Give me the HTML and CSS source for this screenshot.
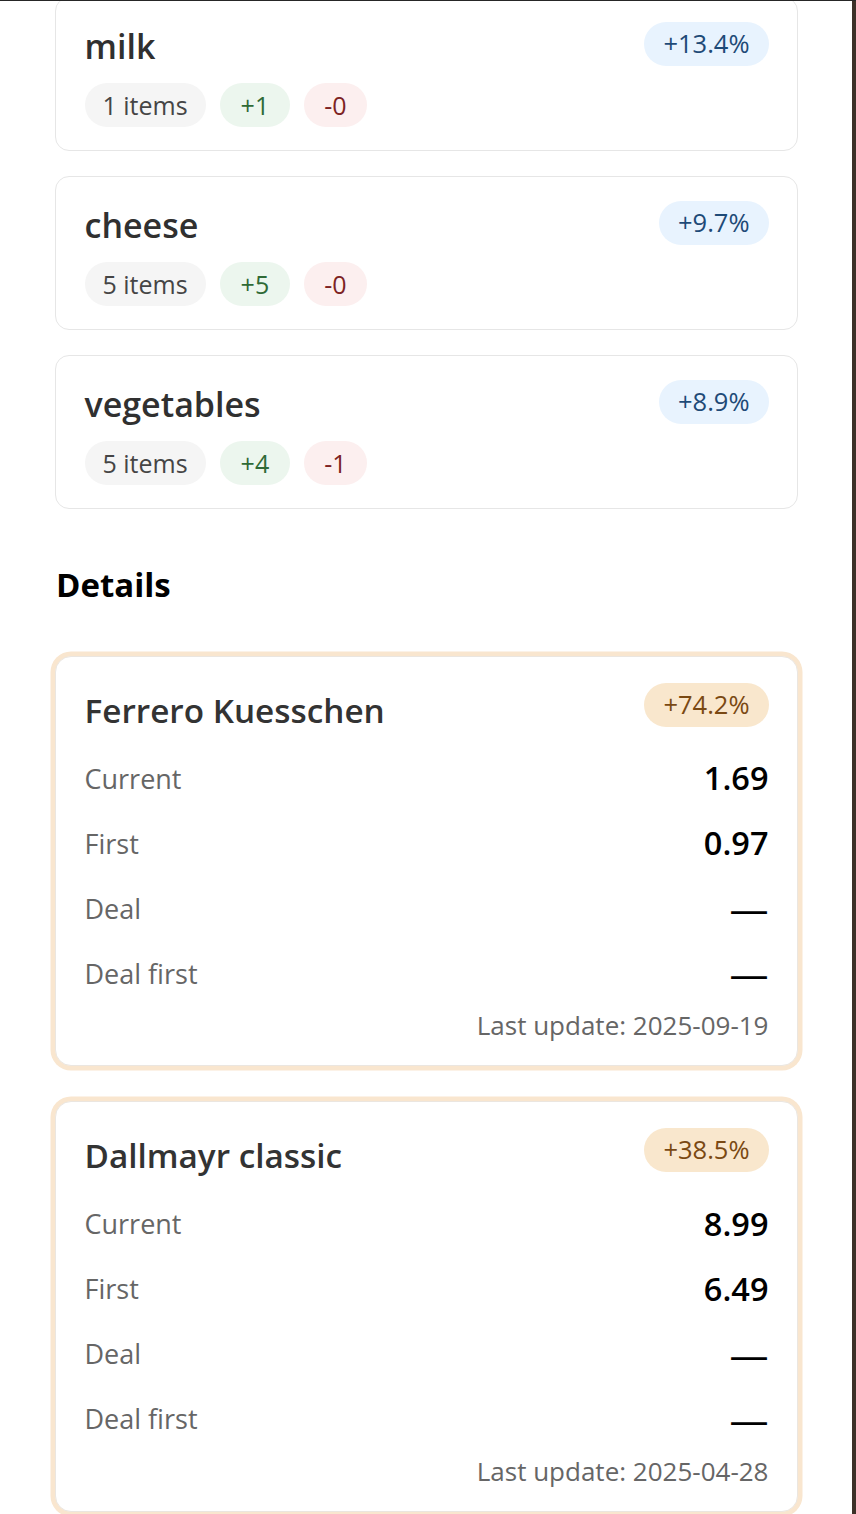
FILE: index.html
```html
<!DOCTYPE html>
<html lang="en">
<head>
<meta charset="utf-8">
<title>Price tracker</title>
<link rel="stylesheet" href="styles.css">
</head>
<body>
<div class="frame">
  <main class="content">
    <section class="groups">
      <div class="group-card">
        <div class="group-main">
          <div class="group-title">milk</div>
          <div class="pills">
            <span class="pill pill-items">1 items</span>
            <span class="pill pill-up">+1</span>
            <span class="pill pill-down">-0</span>
          </div>
        </div>
        <span class="pct pct-blue">+13.4%</span>
      </div>
      <div class="group-card">
        <div class="group-main">
          <div class="group-title">cheese</div>
          <div class="pills">
            <span class="pill pill-items">5 items</span>
            <span class="pill pill-up">+5</span>
            <span class="pill pill-down">-0</span>
          </div>
        </div>
        <span class="pct pct-blue">+9.7%</span>
      </div>
      <div class="group-card">
        <div class="group-main">
          <div class="group-title">vegetables</div>
          <div class="pills">
            <span class="pill pill-items">5 items</span>
            <span class="pill pill-up">+4</span>
            <span class="pill pill-down">-1</span>
          </div>
        </div>
        <span class="pct pct-blue">+8.9%</span>
      </div>
    </section>

    <h2 class="section-title">Details</h2>

    <section class="details">
      <div class="detail-card">
        <div class="detail-head">
          <div class="detail-title">Ferrero Kuesschen</div>
          <span class="pct pct-orange">+74.2%</span>
        </div>
        <div class="row"><span class="label">Current</span><span class="value">1.69</span></div>
        <div class="row"><span class="label">First</span><span class="value">0.97</span></div>
        <div class="row"><span class="label">Deal</span><span class="value dash">—</span></div>
        <div class="row"><span class="label">Deal first</span><span class="value dash">—</span></div>
        <div class="updated">Last update: 2025-09-19</div>
      </div>
      <div class="detail-card">
        <div class="detail-head">
          <div class="detail-title">Dallmayr classic</div>
          <span class="pct pct-orange">+38.5%</span>
        </div>
        <div class="row"><span class="label">Current</span><span class="value">8.99</span></div>
        <div class="row"><span class="label">First</span><span class="value">6.49</span></div>
        <div class="row"><span class="label">Deal</span><span class="value dash">—</span></div>
        <div class="row"><span class="label">Deal first</span><span class="value dash">—</span></div>
        <div class="updated">Last update: 2025-04-28</div>
      </div>
    </section>
  </main>
</div>
</body>
</html>
```

FILE: styles.css
```css
* { box-sizing: border-box; }

html, body {
  margin: 0;
  padding: 0;
  background: #ffffff;
}

body {
  font-family: "Open Sans", "Noto Sans", "Liberation Sans", sans-serif;
  color: #333333;
  border-top: 1px solid #262626;
  overflow: hidden;
  height: 1514px;
}

.frame {
  border-right: 4px solid #3d3128;
  height: 1514px;
  overflow: hidden;
}

.content {
  padding: 0 54px 0 55px;
}

.groups {
  display: flex;
  flex-direction: column;
  gap: 25px;
  margin-top: -4.5px;
}

.group-card {
  display: flex;
  justify-content: space-between;
  align-items: flex-start;
  border: 1.5px solid #e6e6e6;
  border-radius: 14px;
  padding: 24.5px 28.5px 22.5px 28.5px;
  background: #fff;
}

.group-title {
  font-size: 34px;
  font-weight: 600;
  line-height: 48px;
  color: #303030;
}

.pills {
  display: flex;
  gap: 14px;
  margin-top: 13px;
}

.pill {
  display: inline-flex;
  align-items: center;
  height: 44px;
  border-radius: 22px;
  font-size: 25px;
  line-height: 1;
}

.pill-items { background: #f5f5f5; color: #454545; padding: 0 18px; }
.pill-up { background: #ecf6ee; color: #2f6a36; padding: 0 21px; }
.pill-down { background: #fcefef; color: #7d2323; padding: 0 20px; }

.pct {
  display: inline-flex;
  align-items: center;
  height: 44px;
  padding: 0 19px;
  border-radius: 22px;
  font-size: 25.5px;
  line-height: 1;
  white-space: nowrap;
}

.pct-blue { background: #e8f3fe; color: #1e4a77; }
.pct-orange { background: #f9e7cd; color: #7a4913; }

.section-title {
  margin: 56px 0 51px 1px;
  font-size: 33px;
  line-height: 40px;
  font-weight: 700;
  color: #000;
}

.details {
  display: flex;
  flex-direction: column;
  gap: 35px;
}

.detail-card {
  border: 1.5px solid #ebe6e0;
  border-radius: 16px;
  box-shadow: 0 0 0 4.5px #f9e6cf;
  padding: 26px 28.5px 24px 28.5px;
  background: #fff;
}

.detail-head {
  display: flex;
  justify-content: space-between;
  align-items: flex-start;
}

.detail-title {
  font-size: 33.3px;
  font-weight: 600;
  line-height: 54px;
  color: #333333;
}

.row {
  display: flex;
  justify-content: space-between;
  align-items: center;
  height: 65px;
}

.detail-head + .row { margin-top: 9px; }

.label {
  font-size: 27px;
  color: #666666;
}

.value {
  font-size: 32.5px;
  font-weight: 600;
  color: #000;
  line-height: 44px;
}

.value.dash {
  font-size: 39px;
  font-weight: 400;
}

.updated {
  margin-top: 3.5px;
  text-align: right;
  font-size: 26px;
  line-height: 32px;
  color: #666666;
}
```
